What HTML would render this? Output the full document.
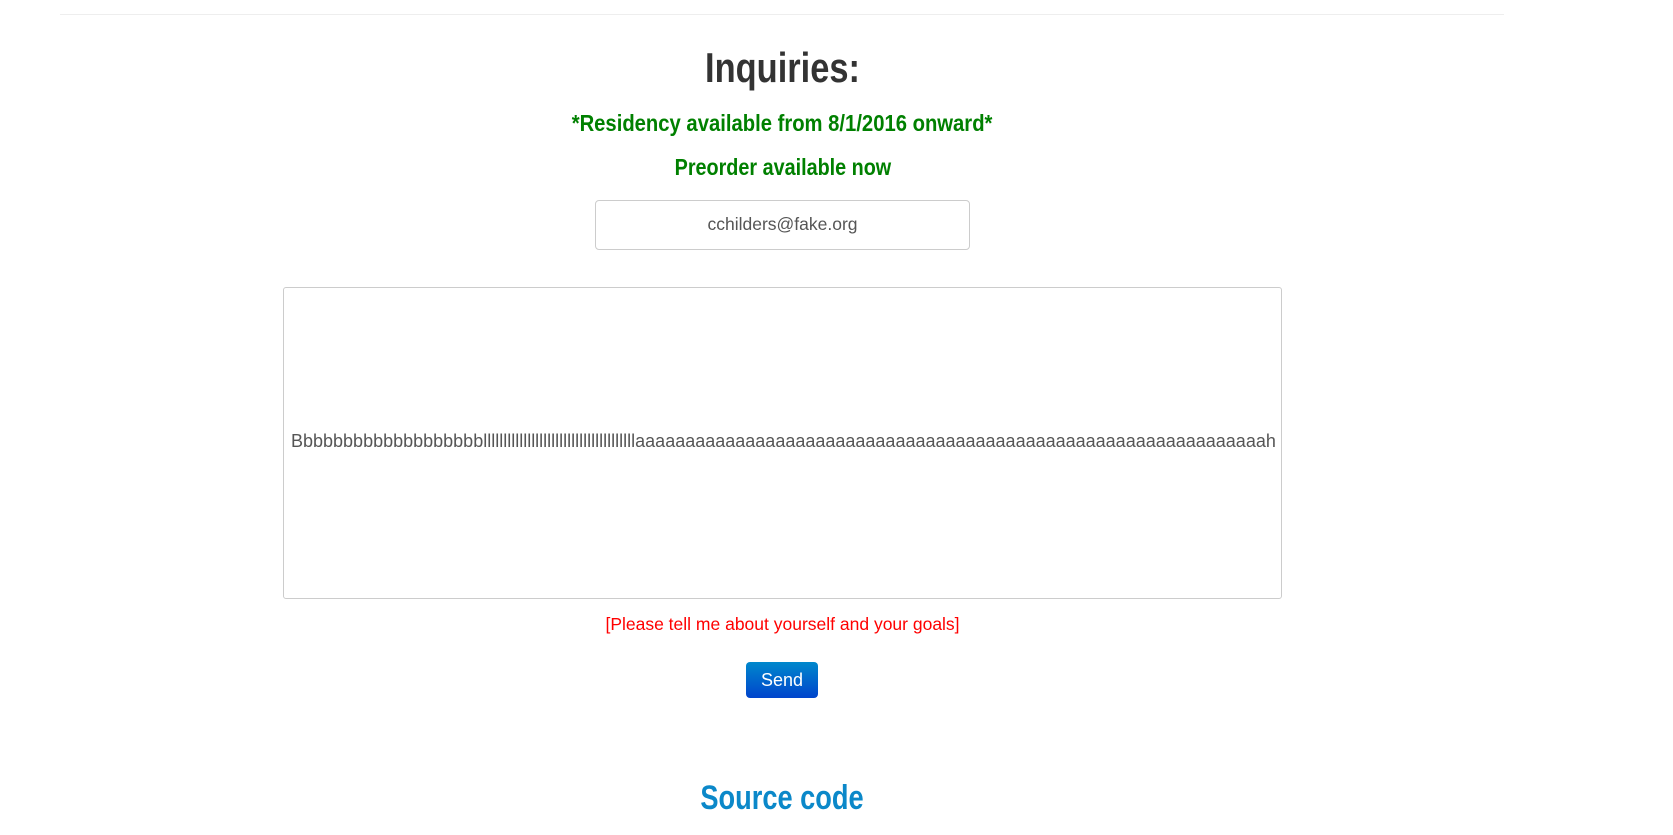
<!DOCTYPE html>
<html><head><meta charset="utf-8"><style>
body{margin:0;width:1673px;height:835px;background:#fff;font-family:"Liberation Sans",sans-serif;position:relative;overflow:hidden}
.a{position:absolute;left:0;width:1565px;text-align:center;white-space:nowrap}
.a span{display:inline-block}
hr{position:absolute;left:60px;top:14px;width:1444px;margin:0;border:0;border-top:1px solid #eee}
.t{top:44px;font-size:42px;font-weight:bold;color:#333}
.t span{transform:scaleX(0.82)}
.g{font-size:23px;font-weight:bold;color:#008000}
.g span{transform:scaleX(0.88)}
.in{position:absolute;left:595px;top:200px;width:373px;height:48px;border:1px solid #ccc;border-radius:4px;text-align:center;line-height:46px;font-size:17.5px;color:#555}
.ta{position:absolute;left:283px;top:287px;width:997px;height:310px;border:1px solid #ccc;border-radius:3px}
.tx{position:absolute;left:291px;top:431px;font-size:18px;color:#555;white-space:nowrap}
.r{top:614px;font-size:17.5px;color:#f00}
.btn{position:absolute;left:746px;top:662px;width:72px;height:36px;border-radius:4px;background:linear-gradient(#0088cc,#0044cc);color:#fff;font-size:18px;text-align:center;line-height:36px}
.s{top:779px;font-size:34px;font-weight:bold;color:#0b88c9}
.s span{transform:scaleX(0.8)}
</style></head><body>
<hr>
<div class="a t"><span>Inquiries:</span></div>
<div class="a g" style="top:110px"><span>*Residency available from 8/1/2016 onward*</span></div>
<div class="a g" style="top:154px"><span style="transform:scaleX(0.86)">Preorder available now</span></div>
<div class="in">cchilders@fake.org</div>
<div class="ta"></div>
<div class="tx">Bbbbbbbbbbbbbbbbbbbllllllllllllllllllllllllllllllllllllllaaaaaaaaaaaaaaaaaaaaaaaaaaaaaaaaaaaaaaaaaaaaaaaaaaaaaaaaaaaaaaah</div>
<div class="a r">[Please tell me about yourself and your goals]</div>
<div class="btn">Send</div>
<div class="a s"><span>Source code</span></div>
</body></html>
